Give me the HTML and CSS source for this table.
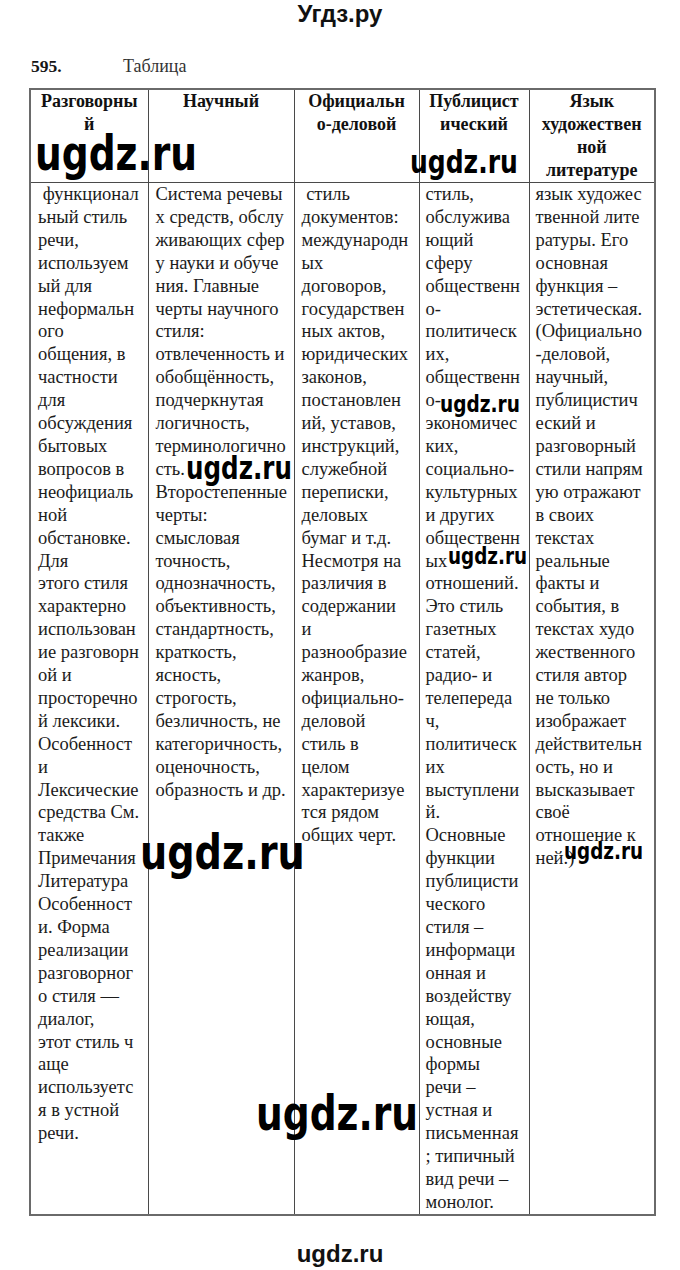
FILE: index.html
```html
<!DOCTYPE html>
<html lang="ru">
<head>
<meta charset="utf-8">
<title>Угдз.ру — 595</title>
<link rel="stylesheet" href="styles.css">
</head>
<body>
<div class="page">
  <header class="site-title">Угдз.ру</header>
  <div class="task"><span class="num">595.</span><span class="label">Таблица</span></div>
  <table class="styles">
    <colgroup>
      <col class="w1"><col class="w2"><col class="w3"><col class="w4"><col class="w5">
    </colgroup>
    <thead>
      <tr>
        <th>Разговорны<br>й</th>
        <th>Научный</th>
        <th>Официальн<br>о-деловой</th>
        <th>Публицист<br>ический</th>
        <th>Язык<br>художествен<br>ной<br>литературе</th>
      </tr>
    </thead>
    <tbody>
      <tr>
        <td class="c1">&nbsp;функционал<br>ьный стиль<br>речи,<br>используем<br>ый для<br>неформальн<br>ого<br>общения, в<br>частности<br>для<br>обсуждения<br>бытовых<br>вопросов в<br>неофициаль<br>ной<br>обстановке.<br>Для<br>этого стиля<br>характерно<br>использован<br>ие разговорн<br>ой и<br>просторечно<br>й лексики.<br>Особенност<br>и<br>Лексические<br>средства См.<br>также<br>Примечания<br>Литература<br>Особенност<br>и. Форма<br>реализации<br>разговорног<br>о стиля —<br>диалог,<br>этот стиль ч<br>аще<br>используетс<br>я в устной<br>речи.</td>
        <td class="c2">Система речевы<br>х средств, обслу<br>живающих сфер<br>у науки и обуче<br>ния. Главные<br>черты научного<br>стиля:<br>отвлеченность и<br>обобщённость,<br>подчеркнутая<br>логичность,<br>терминологично<br>сть.<br>Второстепенные<br>черты:<br>смысловая<br>точность,<br>однозначность,<br>объективность,<br>стандартность,<br>краткость,<br>ясность,<br>строгость,<br>безличность, не<br>категоричность,<br>оценочность,<br>образность и др.</td>
        <td class="c3">&nbsp;стиль<br>документов:<br>международн<br>ых<br>договоров,<br>государствен<br>ных актов,<br>юридических<br>законов,<br>постановлен<br>ий, уставов,<br>инструкций,<br>служебной<br>переписки,<br>деловых<br>бумаг и т.д.<br>Несмотря на<br>различия в<br>содержании<br>и<br>разнообразие<br>жанров,<br>официально-<br>деловой<br>стиль в<br>целом<br>характеризуе<br>тся рядом<br>общих черт.</td>
        <td class="c4">стиль,<br>обслужива<br>ющий<br>сферу<br>общественн<br>о-<br>политическ<br>их,<br>общественн<br>о-<br>экономичес<br>ких,<br>социально-<br>культурных<br>и других<br>общественн<br>ых<br>отношений.<br>Это стиль<br>газетных<br>статей,<br>радио- и<br>телепереда<br>ч,<br>политическ<br>их<br>выступлени<br>й.<br>Основные<br>функции<br>публицисти<br>ческого<br>стиля –<br>информаци<br>онная и<br>воздейству<br>ющая,<br>основные<br>формы<br>речи –<br>устная и<br>письменная<br>; типичный<br>вид речи –<br>монолог.</td>
        <td class="c5">язык художес<br>твенной лите<br>ратуры. Его<br>основная<br>функция –<br>эстетическая.<br>(Официально<br>-деловой,<br>научный,<br>публицистич<br>еский и<br>разговорный<br>стили напрям<br>ую отражают<br>в своих<br>текстах<br>реальные<br>факты и<br>события, в<br>текстах худо<br>жественного<br>стиля автор<br>не только<br>изображает<br>действительн<br>ость, но и<br>высказывает<br>своё<br>отношение к<br>ней.)</td>
      </tr>
    </tbody>
  </table>
  <footer class="site-foot">ugdz.ru</footer>

  <span class="wm wm1">ugdz.ru</span>
  <span class="wm wm2">ugdz.ru</span>
  <span class="wm wm3">ugdz.ru</span>
  <span class="wm wm4">ugdz.ru</span>
  <span class="wm wm5">ugdz.ru</span>
  <span class="wm wm6">ugdz.ru</span>
  <span class="wm wm7">ugdz.ru</span>
  <span class="wm wm8">ugdz.ru</span>
</div>
</body>
</html>
```
FILE: styles.css
```css
html, body {
  margin: 0;
  padding: 0;
  background: #ffffff;
}

.page {
  position: relative;
  width: 680px;
  height: 1270px;
  overflow: hidden;
  color: #161616;
}

.site-title {
  font-family: "Liberation Sans", Arial, sans-serif;
  font-weight: bold;
  font-size: 24px;
  line-height: 28px;
  text-align: center;
  color: #111;
}

.task {
  margin-top: 28px;
  margin-left: 31px;
  height: 20px;
  font-family: "Liberation Serif", "Times New Roman", serif;
  font-size: 18px;
  line-height: 20px;
  display: flex;
}

.task .num {
  font-weight: bold;
  font-size: 17.5px;
  width: 92px;
}

.task .label {
  color: #333;
}

.styles {
  margin-top: 12px;
  margin-left: 29px;
  width: 625px;
  table-layout: fixed;
  border-collapse: collapse;
  border: 2px solid #6a6a6a;
  font-family: "Liberation Serif", "Times New Roman", serif;
}

.w1 { width: 118px; }
.w2 { width: 146px; }
.w3 { width: 125px; }
.w4 { width: 110px; }
.w5 { width: 126px; }

.styles th,
.styles td {
  border: 1px solid #4a4a4a;
  vertical-align: top;
  white-space: nowrap;
  overflow: hidden;
}

.styles th {
  font-size: 18px;
  font-weight: bold;
  line-height: 23px;
  text-align: center;
  padding: 0 2px;
  color: #111;
}

.styles td {
  font-size: 18.5px;
  line-height: 22.9px;
  padding: 0 0 0 7px;
  text-align: left;
  color: #1c1c1c;
}

.styles td.c4,
.styles td.c5 {
  padding-left: 6px;
}

.site-foot {
  margin-top: 24px;
  font-family: "Liberation Sans", Arial, sans-serif;
  font-weight: bold;
  font-size: 24px;
  line-height: 28px;
  text-align: center;
  color: #111;
}

/* watermarks overlaying the scan */
.wm {
  position: absolute;
  font-family: "DejaVu Sans Condensed", "DejaVu Sans", sans-serif;
  font-stretch: semi-condensed;
  font-weight: bold;
  line-height: 1;
  color: #000;
  white-space: nowrap;
  transform: scaleY(1.14);
  transform-origin: 0 84.6%;
}

.wm1 { left: 35px;  top: 135px;  font-size: 41.8px; }
.wm2 { left: 410px; top: 150px;  font-size: 27.8px; }
.wm3 { left: 440px; top: 395px;  font-size: 20.6px; }
.wm4 { left: 186px; top: 456px;  font-size: 27.3px; }
.wm5 { left: 448px; top: 547px;  font-size: 20.4px; }
.wm6 { left: 140px; top: 834px;  font-size: 42.5px; }
.wm7 { left: 564px; top: 842px;  font-size: 20.4px; }
.wm8 { left: 256px; top: 1095px; font-size: 41.8px; }
```
